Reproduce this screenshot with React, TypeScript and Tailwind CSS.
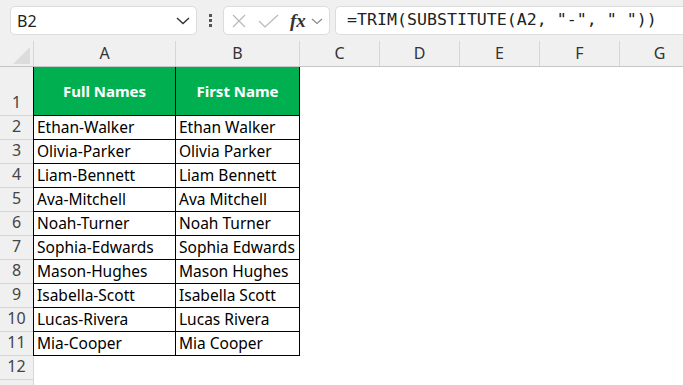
import React from "react";

const rows: [string, string][] = [
  ["Ethan-Walker", "Ethan Walker"],
  ["Olivia-Parker", "Olivia Parker"],
  ["Liam-Bennett", "Liam Bennett"],
  ["Ava-Mitchell", "Ava Mitchell"],
  ["Noah-Turner", "Noah Turner"],
  ["Sophia-Edwards", "Sophia Edwards"],
  ["Mason-Hughes", "Mason Hughes"],
  ["Isabella-Scott", "Isabella Scott"],
  ["Lucas-Rivera", "Lucas Rivera"],
  ["Mia-Cooper", "Mia Cooper"],
];

const extraCols = ["C", "D", "E", "F", "G"];

function EmptyCols() {
  return (
    <>
      {extraCols.map((c) => (
        <div key={c} className="w-[80px] shrink-0" />
      ))}
    </>
  );
}

export default function App() {
  const cellFont = { fontFamily: "'Noto Sans', 'Open Sans', sans-serif" };
  return (
    <div
      className="w-[683px] h-[385px] overflow-hidden bg-white text-[#1f1f1f]"
      style={cellFont}
    >
      {/* Top bar */}
      <div className="h-[41px] bg-[#f0f0f0] flex items-start pt-[6px] pl-[10px]">
        <div className="w-[187px] h-[29px] shrink-0 rounded-[5px] border border-[#dcdcdc] bg-white flex items-center justify-between pl-[6px] pr-[6px]">
          <span className="text-[16px] text-[#222]">B2</span>
          <svg width="14" height="8" viewBox="0 0 14 8">
            <path d="M1 1 L7 6.5 L13 1" fill="none" stroke="#333" strokeWidth="1.4" />
          </svg>
        </div>
        <div className="w-[26px] h-[29px] shrink-0 flex flex-col items-center justify-center gap-[2px]">
          <div className="w-[3px] h-[3px] bg-[#555]" />
          <div className="w-[3px] h-[3px] bg-[#555]" />
          <div className="w-[3px] h-[3px] bg-[#555]" />
        </div>
        <div className="w-[107px] h-[29px] shrink-0 rounded-[5px] border border-[#dcdcdc] bg-white flex items-center pl-[8px]">
          <svg width="14" height="14" viewBox="0 0 14 14">
            <path d="M1 1 L13 13 M13 1 L1 13" stroke="#b8b8b8" strokeWidth="1.2" />
          </svg>
          <svg width="21" height="14" viewBox="0 0 21 14" className="ml-[12px]">
            <path d="M1 7 L7 13 L20 1" fill="none" stroke="#b8b8b8" strokeWidth="1.2" />
          </svg>
          <span
            className="ml-[11px] text-[19px] italic font-bold text-[#333] leading-none"
            style={{ fontFamily: "'Liberation Serif', 'DejaVu Serif', serif" }}
          >
            fx
          </span>
          <svg width="12" height="7" viewBox="0 0 12 7" className="ml-[5px] mt-[2px]">
            <path d="M1 1 L6 5.5 L11 1" fill="none" stroke="#888" strokeWidth="1.1" />
          </svg>
        </div>
        <div className="ml-[5px] flex-1 h-[29px] rounded-l-[5px] border border-r-0 border-[#dcdcdc] bg-white flex items-center pl-[11px]">
          <span
            className="text-[16.6px] text-[#222] whitespace-pre"
            style={{ fontFamily: "'DejaVu Sans Mono', 'Liberation Mono', monospace" }}
          >
            =TRIM(SUBSTITUTE(A2, "-", " "))
          </span>
        </div>
      </div>

      {/* Column headers */}
      <div className="h-[26px] bg-[#f0f0f0] border-b border-[#c6c6c6] flex text-[16px] text-[#333]">
        <div className="w-[34px] shrink-0 border-r border-[#d6d6d6] relative">
          <svg width="18" height="18" viewBox="0 0 18 18" className="absolute right-[2px] bottom-[1px]">
            <path d="M17 0 L17 17 L0 17 Z" fill="#dcdcdc" />
          </svg>
        </div>
        <div className="w-[142px] shrink-0 border-r border-[#d6d6d6] flex items-end justify-center pb-[1px]">A</div>
        <div className="w-[124px] shrink-0 border-r border-[#d6d6d6] flex items-end justify-center pb-[1px]">B</div>
        {extraCols.map((c) => (
          <div key={c} className="w-[80px] shrink-0 border-r border-[#d6d6d6] flex items-end justify-center pb-[1px]">
            {c}
          </div>
        ))}
      </div>

      {/* Row 1 */}
      <div className="h-[49px] flex">
        <div className="w-[33px] shrink-0 bg-[#f0f0f0] border-b border-[#d6d6d6] flex items-end justify-center pb-[1px] text-[16px] text-[#444]">
          1
        </div>
        <div className="w-[143px] shrink-0 bg-[#00b050] border-l border-r border-b border-black flex items-center justify-center text-white font-bold text-[15px]">
          Full Names
        </div>
        <div className="w-[124px] shrink-0 bg-[#00b050] border-r border-b border-black flex items-center justify-center text-white font-bold text-[15px]">
          First Name
        </div>
        <EmptyCols />
      </div>

      {rows.map(([a, b], i) => (
        <div key={a} className="h-[24px] flex">
          <div className="w-[33px] shrink-0 bg-[#f0f0f0] border-b border-[#d6d6d6] flex items-end justify-center pb-[1px] text-[16px] text-[#444]">
            {i + 2}
          </div>
          <div className="w-[143px] shrink-0 border-l border-r border-b border-black flex items-end pl-[3px] text-[15.5px] leading-[23px] text-black">
            {a}
          </div>
          <div className="w-[124px] shrink-0 border-r border-b border-black flex items-end pl-[3px] text-[15.5px] leading-[23px] text-black">
            {b}
          </div>
          <EmptyCols />
        </div>
      ))}

      {/* Row 12 */}
      <div className="h-[24px] flex">
        <div className="w-[34px] shrink-0 bg-[#f0f0f0] border-r border-b border-[#d6d6d6] flex items-end justify-center pb-[1px] text-[16px] text-[#444]">
          12
        </div>
      </div>
      <div className="h-[24px] flex">
        <div className="w-[34px] shrink-0 bg-[#f0f0f0] border-r border-[#d6d6d6]" />
      </div>
    </div>
  );
}
